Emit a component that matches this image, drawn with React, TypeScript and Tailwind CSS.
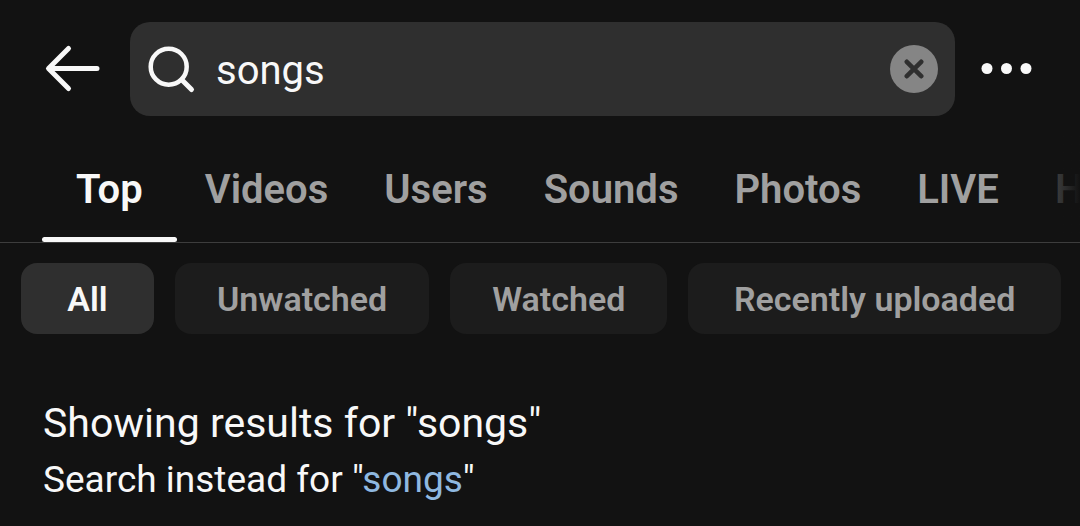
import { useState } from "react";

const tabs = ["Top", "Videos", "Users", "Sounds", "Photos", "LIVE", "Hashtags"];
const filters = ["All", "Unwatched", "Watched", "Recently uploaded"];

const SearchBar = () => {
  const [query, setQuery] = useState("songs");

  return (
    <header className="flex items-center pt-[22px] pl-11 pr-[45px]">
      <button type="button" aria-label="Back" className="shrink-0 mr-7">
        <svg width="58" height="58" viewBox="0 0 58 58" fill="none">
          <path
            d="M24.5 8.5 4.5 28.5l20 20M5 28.5h48"
            stroke="#f8f8f8"
            strokeWidth="5"
            strokeLinecap="round"
            strokeLinejoin="round"
          />
        </svg>
      </button>
      <div className="flex flex-1 min-w-0 items-center h-[94px] rounded-[20px] bg-[#2f2f2f] pl-4 pr-[17px]">
        <svg
          className="shrink-0"
          width="50"
          height="50"
          viewBox="0 0 50 50"
          fill="none"
          stroke="#f8f8f8"
          strokeWidth="4.5"
          strokeLinecap="round"
        >
          <circle cx="22.7" cy="22.7" r="18" />
          <path d="m36 36 9.5 9.5" strokeWidth="5" />
        </svg>
        <input
          type="text"
          aria-label="Search"
          value={query}
          onChange={(e) => setQuery(e.target.value)}
          className="flex-1 min-w-0 ml-5 pt-1 bg-transparent text-[40px] leading-[48px] text-[#f8f8f8] outline-none"
        />
        <button
          type="button"
          aria-label="Clear"
          onClick={() => setQuery("")}
          className="flex shrink-0 items-center justify-center size-12 rounded-full bg-[#858585]"
        >
          <svg width="20" height="20" viewBox="0 0 20 20" fill="none">
            <path
              d="m2.8 2.8 14.4 14.4M17.2 2.8 2.8 17.2"
              stroke="#2f2f2f"
              strokeWidth="4.6"
              strokeLinecap="round"
            />
          </svg>
        </button>
      </div>
      <button type="button" aria-label="More" className="shrink-0 ml-6">
        <svg width="56" height="58" viewBox="0 0 56 58" fill="#f8f8f8">
          <circle cx="8" cy="28.5" r="5.5" />
          <circle cx="27.5" cy="28.5" r="5.5" />
          <circle cx="47" cy="28.5" r="5.5" />
        </svg>
      </button>
    </header>
  );
};

const App = () => {
  const [tab, setTab] = useState("Top");
  const [filter, setFilter] = useState("All");

  return (
    <div className="min-h-screen bg-[#121212] text-[#f8f8f8] font-['Roboto',sans-serif]">
      <SearchBar />

      <nav className="relative mt-5 border-b border-[#3d3d3d]">
        <div className="flex overflow-hidden pl-[42px]">
          {tabs.map((name) => (
            <button
              key={name}
              type="button"
              onClick={() => setTab(name)}
              className={`flex flex-col shrink-0 text-[40px] leading-[48px] font-semibold ${
                tab === name ? "text-[#f8f8f8]" : "text-[#a0a0a0]"
              }`}
            >
              <span
                className={`pt-[30px] pb-[23px] ${
                  name === "Top" ? "px-[34px]" : "px-7"
                }`}
              >
                {name}
              </span>
              <span
                className={`w-full h-[5px] rounded-full ${
                  tab === name ? "bg-[#f8f8f8]" : "bg-transparent"
                }`}
              ></span>
            </button>
          ))}
        </div>
        {/* fade over the tabs that run off the edge */}
        <div className="absolute top-0 bottom-1 right-0 w-12 bg-linear-to-r from-[#121212]/40 to-[#121212] pointer-events-none"></div>
      </nav>

      <div className="flex gap-[21px] pl-[21px] pr-[19px] pt-5 overflow-hidden">
        {filters.map((name) => (
          <button
            key={name}
            type="button"
            onClick={() => setFilter(name)}
            className={`shrink-0 last:grow h-[71px] min-w-[133px] px-[42px] rounded-2xl text-[34px] leading-10 font-semibold ${
              filter === name
                ? "bg-[#2f2f2f] text-[#f8f8f8]"
                : "bg-[#1c1c1c] text-[#a0a0a0]"
            }`}
          >
            {name}
          </button>
        ))}
      </div>

      <main className="px-[43px] pt-[65px]">
        <h1 className="text-[41px] leading-[48px]">
          Showing results for "songs"
        </h1>
        <p className="mt-2 text-[37px] leading-[50px]">
          Search instead for "
          <a href="#songs" className="text-[#8fb8e0]">
            songs
          </a>
          "
        </p>
      </main>
    </div>
  );
};

export default App;
